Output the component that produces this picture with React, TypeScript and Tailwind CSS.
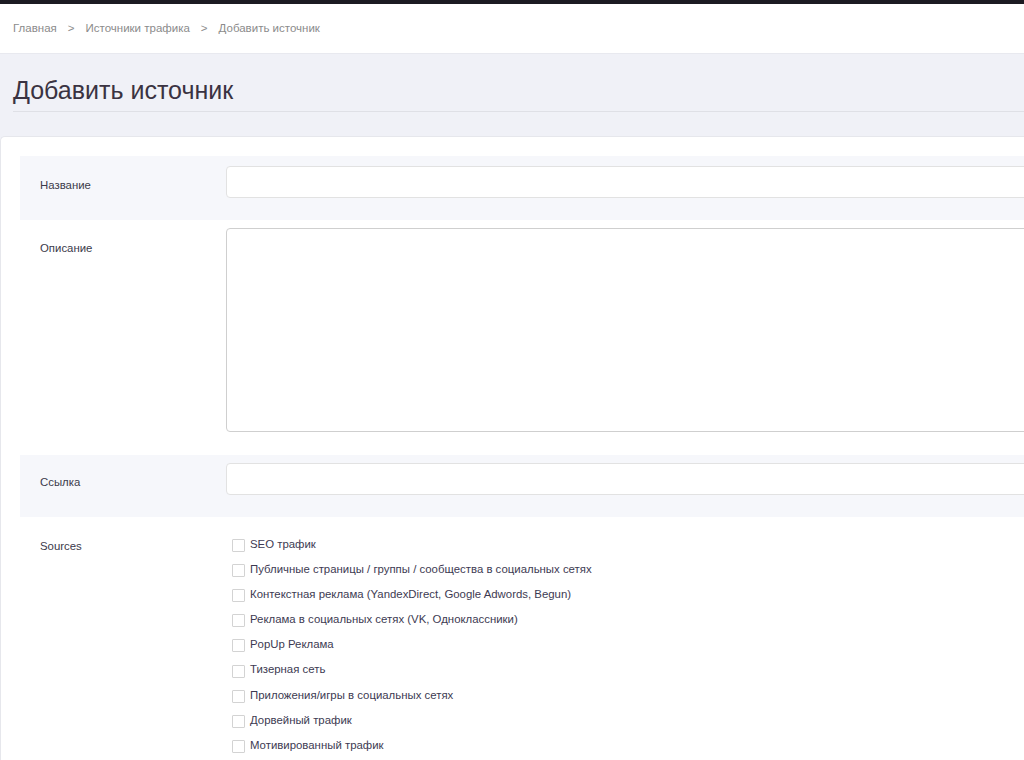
import React from "react";

const sources = [
  "SEO трафик",
  "Публичные страницы / группы / сообщества в социальных сетях",
  "Контекстная реклама (YandexDirect, Google Adwords, Begun)",
  "Реклама в социальных сетях (VK, Одноклассники)",
  "PopUp Реклама",
  "Тизерная сеть",
  "Приложения/игры в социальных сетях",
  "Дорвейный трафик",
  "Мотивированный трафик",
];

export default function App() {
  return (
    <div
      className="w-[1024px] h-[760px] overflow-hidden bg-[#f0f1f7]"
      style={{ fontFamily: '"Liberation Sans", Arial, sans-serif' }}
    >
      <div className="h-[4px] bg-[#1c1b22]" />
      <div className="h-[50px] bg-white border-b border-[#e8e9ef] flex items-center pl-[13px] text-[11.5px] text-[#8b8b8b]">
        <span>Главная</span>
        <span className="mx-[11px]">&gt;</span>
        <span>Источники трафика</span>
        <span className="mx-[11px]">&gt;</span>
        <span>Добавить источник</span>
      </div>
      <div className="pl-[13px] pt-[19px]">
        <div className="h-[39px] border-b border-[#dfe0e6] text-[25px] leading-[34px] text-[#3a3342] w-[1100px]">
          Добавить источник
        </div>
      </div>
      <div className="mt-[24px] bg-white rounded-tl-[5px] border-t border-l border-[#e6e7ec] pt-[19px] pl-[19px] w-[1200px] h-[700px]">
        {/* Row 1 */}
        <div className="flex bg-[#f6f7fb] h-[64px]">
          <div className="w-[206px] pl-[20px] pt-[21px] text-[11.4px] leading-[16px] text-[#3b3a4a]">Название</div>
          <div className="flex-1 pt-[10px]">
            <div className="h-[32px] bg-white border border-[#e2e2e2] rounded-[4px]" />
          </div>
        </div>
        {/* Row 2 */}
        <div className="flex bg-white h-[235px]">
          <div className="w-[206px] pl-[20px] pt-[20px] text-[11.4px] leading-[16px] text-[#3b3a4a]">Описание</div>
          <div className="flex-1 pt-[8px]">
            <div className="h-[204px] bg-white border border-[#cfcfcf] rounded-[4px]" />
          </div>
        </div>
        {/* Row 3 */}
        <div className="flex bg-[#f6f7fb] h-[62px]">
          <div className="w-[206px] pl-[20px] pt-[19px] text-[11.4px] leading-[16px] text-[#3b3a4a]">Ссылка</div>
          <div className="flex-1 pt-[8px]">
            <div className="h-[32px] bg-white border border-[#e2e2e2] rounded-[4px]" />
          </div>
        </div>
        {/* Row 4 */}
        <div className="flex bg-white">
          <div className="w-[206px] pl-[20px] pt-[21px] text-[11.4px] leading-[16px] text-[#3b3a4a]">Sources</div>
          <div className="flex-1 pt-[15px] pl-[6px] flex flex-col">
            {sources.map((s) => (
              <label key={s} className="flex items-center h-[25.1px] text-[11.4px] text-[#3d3a52]">
                <span className="w-[13px] h-[13px] border border-[#d3d3d3] bg-white rounded-[1px] shrink-0 mt-[2px]" />
                <span className="ml-[5px]">{s}</span>
              </label>
            ))}
          </div>
        </div>
      </div>
    </div>
  );
}
